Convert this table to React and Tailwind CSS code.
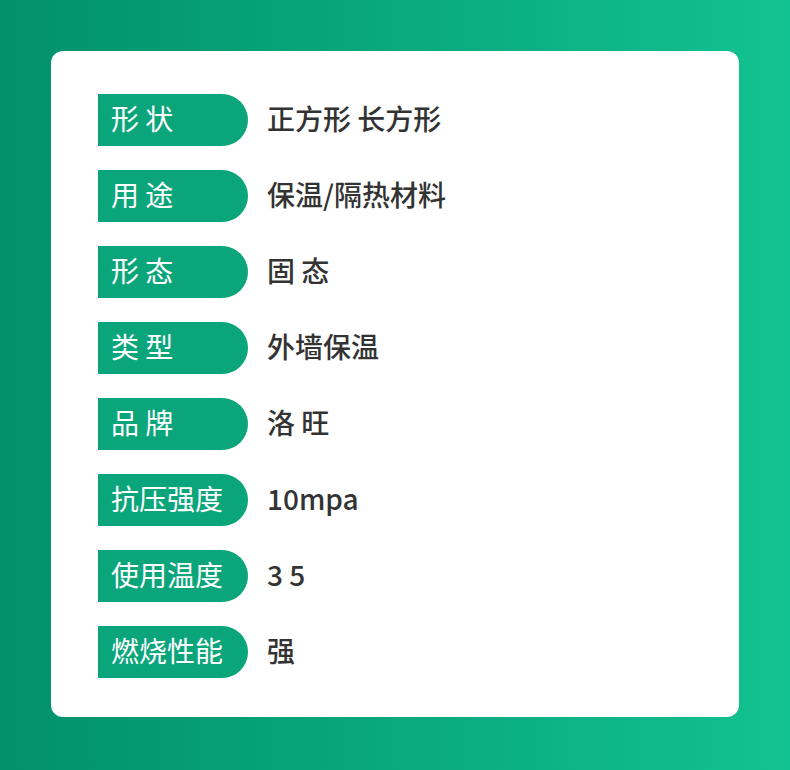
const rows = [
  ["形 状", "正方形 长方形"],
  ["用 途", "保温/隔热材料"],
  ["形 态", "固 态"],
  ["类 型", "外墙保温"],
  ["品 牌", "洛 旺"],
  ["抗压强度", "10mpa"],
  ["使用温度", "3 5"],
  ["燃烧性能", "强"],
];

export default function App() {
  return (
    <div
      className="w-[790px] h-[770px] bg-gradient-to-r from-[#02916a] to-[#12c290] p-[51px]"
      style={{ fontFamily: '"Noto Sans CJK SC", "Noto Sans", sans-serif' }}
    >
      <div className="w-[688px] h-[666px] bg-white rounded-[12px] pt-[43px] pl-[47px] flex flex-col gap-[24px]">
        {rows.map(([label, value]) => (
          <div key={label} className="flex items-center h-[52px]">
            <div className="w-[150px] h-[52px] bg-[#0aa57a] rounded-r-full pl-[13px] pb-[5px] flex items-center text-white text-[28px] leading-none">
              {label}
            </div>
            <div className="ml-[19px] pb-[5px] text-[28px] font-medium leading-none text-[#333333]">
              {value}
            </div>
          </div>
        ))}
      </div>
    </div>
  );
}
